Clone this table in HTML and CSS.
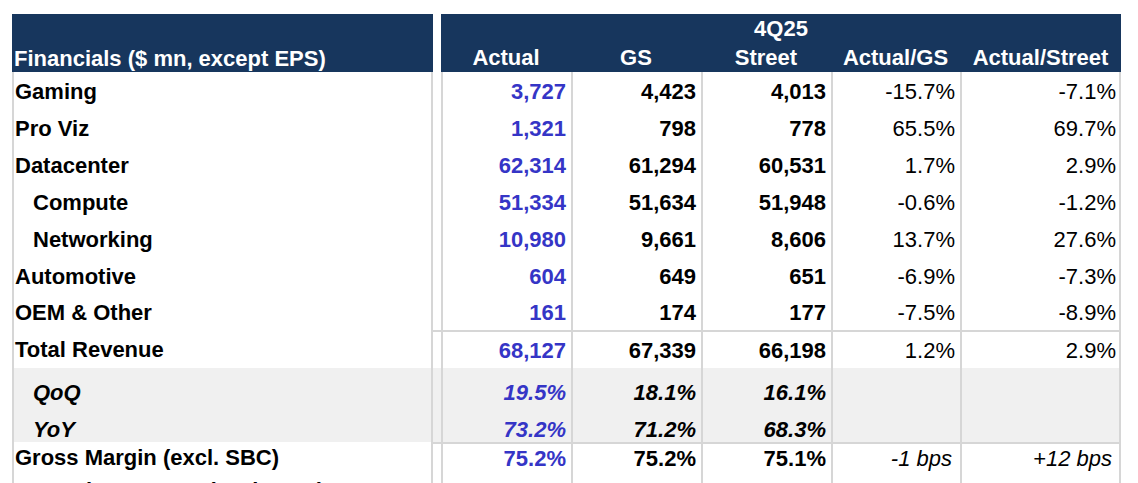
FILE: index.html
```html
<!DOCTYPE html>
<html lang="en">
<head>
<meta charset="utf-8">
<title>4Q25 Financials</title>
<link rel="stylesheet" href="styles.css">
</head>
<body>
<div class="sheet">
  <div class="h h-label">Financials ($ mn, except EPS)</div>
  <div class="h-gap"></div>
  <div class="h h-period">4Q25</div>
  <div class="h">Actual</div>
  <div class="h">GS</div>
  <div class="h">Street</div>
  <div class="h">Actual/GS</div>
  <div class="h">Actual/Street</div>

  <div class="row">
    <div class="c lbl">Gaming</div><div class="gap"></div>
    <div class="c act">3,727</div><div class="c">4,423</div><div class="c">4,013</div>
    <div class="c pct">-15.7%</div><div class="c pct last">-7.1%</div>
  </div>
  <div class="row">
    <div class="c lbl">Pro Viz</div><div class="gap"></div>
    <div class="c act">1,321</div><div class="c">798</div><div class="c">778</div>
    <div class="c pct">65.5%</div><div class="c pct last">69.7%</div>
  </div>
  <div class="row">
    <div class="c lbl">Datacenter</div><div class="gap"></div>
    <div class="c act">62,314</div><div class="c">61,294</div><div class="c">60,531</div>
    <div class="c pct">1.7%</div><div class="c pct last">2.9%</div>
  </div>
  <div class="row">
    <div class="c lbl sub">Compute</div><div class="gap"></div>
    <div class="c act">51,334</div><div class="c">51,634</div><div class="c">51,948</div>
    <div class="c pct">-0.6%</div><div class="c pct last">-1.2%</div>
  </div>
  <div class="row">
    <div class="c lbl sub">Networking</div><div class="gap"></div>
    <div class="c act">10,980</div><div class="c">9,661</div><div class="c">8,606</div>
    <div class="c pct">13.7%</div><div class="c pct last">27.6%</div>
  </div>
  <div class="row">
    <div class="c lbl">Automotive</div><div class="gap"></div>
    <div class="c act">604</div><div class="c">649</div><div class="c">651</div>
    <div class="c pct">-6.9%</div><div class="c pct last">-7.3%</div>
  </div>
  <div class="row">
    <div class="c lbl">OEM &amp; Other</div><div class="gap"></div>
    <div class="c act">161</div><div class="c">174</div><div class="c">177</div>
    <div class="c pct">-7.5%</div><div class="c pct last">-8.9%</div>
  </div>
  <div class="row sep">
    <div class="c lbl">Total Revenue</div><div class="gap"></div>
    <div class="c act">68,127</div><div class="c">67,339</div><div class="c">66,198</div>
    <div class="c pct">1.2%</div><div class="c pct last">2.9%</div>
  </div>
  <div class="row band">
    <div class="c lbl sub it">QoQ</div><div class="gap"></div>
    <div class="c act it">19.5%</div><div class="c it">18.1%</div><div class="c it">16.1%</div>
    <div class="c pct"></div><div class="c pct last"></div>
  </div>
  <div class="row band">
    <div class="c lbl sub it">YoY</div><div class="gap"></div>
    <div class="c act it">73.2%</div><div class="c it">71.2%</div><div class="c it">68.3%</div>
    <div class="c pct"></div><div class="c pct last"></div>
  </div>
  <div class="row sep short">
    <div class="c lbl">Gross Margin (excl. SBC)</div><div class="gap"></div>
    <div class="c act">75.2%</div><div class="c">75.2%</div><div class="c">75.1%</div>
    <div class="c pct it bps">-1 bps</div><div class="c pct it bps last">+12 bps</div>
  </div>
  <div class="row">
    <div class="c lbl">Operating Income (excl. SBC)</div><div class="gap"></div>
    <div class="c act">46,107</div><div class="c">45,585</div><div class="c">44,748</div>
    <div class="c pct">1.1%</div><div class="c pct last">3.0%</div>
  </div>
</div>
</body>
</html>
```

FILE: styles.css
```css
html, body {
  margin: 0;
  padding: 0;
  background: #ffffff;
  overflow: hidden;
}

body {
  font-family: "Liberation Sans", Arial, Helvetica, sans-serif;
  font-size: 22px;
  color: #000000;
}

.sheet {
  display: grid;
  grid-template-columns: 421px 8px 130px 130px 130px 129px 161px;
  grid-template-rows: 29px 29px 38px 37px 37px 37px 37px 37px 35px 38px 37px 37px 30px 37px;
  margin: 14px 0 0 12px;
}

.row {
  display: contents;
}

/* header */
.h {
  background: #17365d;
  color: #ffffff;
  font-weight: bold;
  display: flex;
  align-items: center;
  justify-content: center;
  line-height: 25px;
  white-space: nowrap;
}

.h-label {
  grid-row: 1 / 3;
  grid-column: 1;
  justify-content: flex-start;
  align-items: flex-end;
  padding: 0 0 1px 2px;
}

.h-gap {
  grid-row: 1 / 3;
  grid-column: 2;
  background: #ffffff;
}

.h-period {
  grid-column: 3 / 8;
}

/* body cells */
.c {
  box-sizing: border-box;
  display: flex;
  align-items: center;
  justify-content: flex-end;
  padding-right: 5px;
  border-left: 2px solid #d6d6d6;
  line-height: 25px;
  white-space: nowrap;
  font-weight: bold;
  background: #ffffff;
}

.lbl {
  justify-content: flex-start;
  padding-left: 1px;
  padding-right: 0;
  border-right: 2px solid #d6d6d6;
}

.sub {
  padding-left: 19px;
}

.gap {
  box-sizing: border-box;
  background: #ffffff;
}

.last {
  border-right: 2px solid #d6d6d6;
  padding-right: 3px;
}

.act {
  color: #3535c6;
}

.pct {
  font-weight: normal;
}

.it {
  font-style: italic;
}

.bps {
  padding-right: 8px;
}

.bps.last {
  padding-right: 7px;
}

.band > .c,
.band > .gap {
  background: #f0f0f0;
  align-items: flex-start;
  padding-top: 12px;
}

.sep > .gap,
.sep > .c:not(.lbl) {
  border-top: 2px solid #d6d6d6;
}
```
